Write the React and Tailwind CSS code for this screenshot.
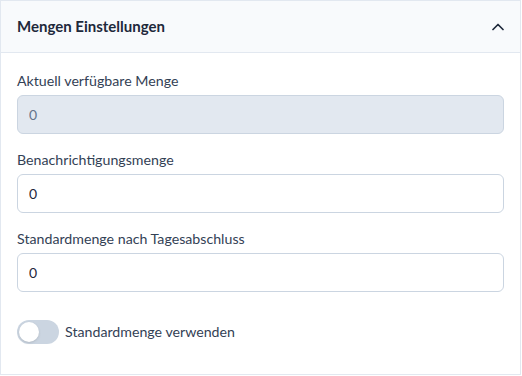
import React, { useState } from 'react';

const font = { fontFamily: 'Lato, "Liberation Sans", sans-serif' };

const Field = ({ label, value, disabled, className = '' }) => (
  <div className={className}>
    <label className="block text-[14.2px] leading-5 text-[#334155]">{label}</label>
    <input
      type="text"
      defaultValue={value}
      disabled={disabled}
      className={
        'mt-1 block w-full h-[39px] rounded-md border px-[11px] text-[14px] outline-none ' +
        (disabled
          ? 'bg-[#e2e8f0] border-[#cbd5e1] text-[#64748b]'
          : 'bg-white border-[#cbd5e1] text-[#1e293b]')
      }
    />
  </div>
);

const App = () => {
  const [useDefault, setUseDefault] = useState(false);

  return (
    <div style={font} className="w-[521px] h-[375px] bg-white border border-[#e2e8f0] flex flex-col">
      <div className="h-[52px] shrink-0 bg-[#f8fafc] border-b border-[#e2e8f0] flex items-center justify-between pl-4 pr-4">
        <h2 className="text-[15px] font-bold text-[#1e293b]">Mengen Einstellungen</h2>
        <svg width="12" height="8" viewBox="0 0 12 8">
          <polyline points="1,6.5 6,1.5 11,6.5" fill="none" stroke="#1e293b" strokeWidth="1.7" strokeLinecap="round" strokeLinejoin="round" />
        </svg>
      </div>

      <div className="px-4 pt-[18px]">
        <Field label="Aktuell verfügbare Menge" value="0" disabled />
        <Field label="Benachrichtigungsmenge" value="0" className="mt-4" />
        <Field label="Standardmenge nach Tagesabschluss" value="0" className="mt-4" />

        <div className="mt-[28px] flex items-center gap-[6px]">
          <button
            type="button"
            onClick={() => setUseDefault(!useDefault)}
            className={
              'relative w-[42px] h-6 rounded-full transition ' +
              (useDefault ? 'bg-[#3b82f6]' : 'bg-[#cbd5e1]')
            }
          >
            <span
              className={
                'absolute top-[2px] h-5 w-5 rounded-full bg-white shadow-sm transition-all ' +
                (useDefault ? 'left-[20px]' : 'left-[2px]')
              }
            />
          </button>
          <span className="text-[14.2px] text-[#334155]">Standardmenge verwenden</span>
        </div>
      </div>
    </div>
  );
};

export default App;
